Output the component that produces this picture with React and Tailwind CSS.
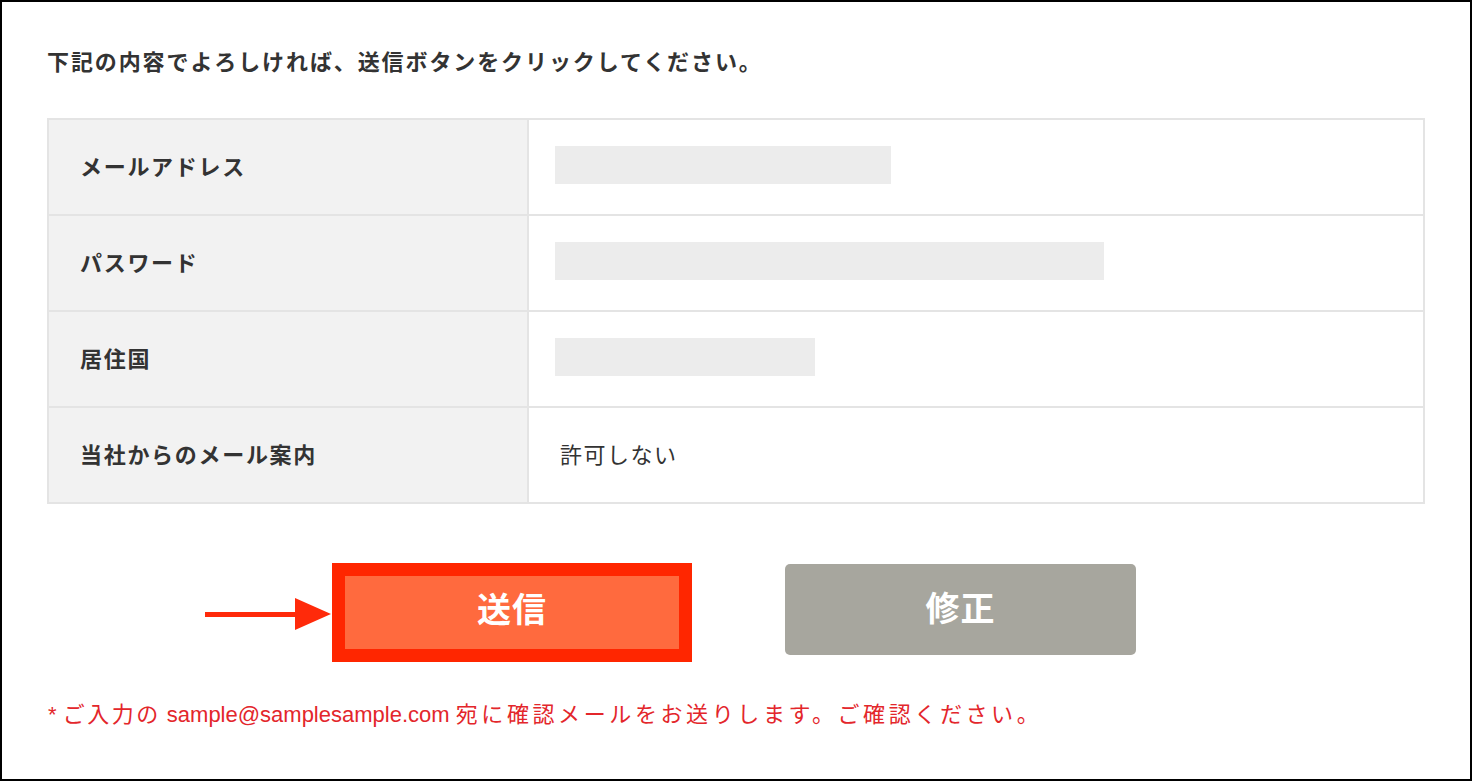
export default function App() {
  const rows = [
    { label: 'メールアドレス', bar: 'w-[336px]' },
    { label: 'パスワード', bar: 'w-[549px]' },
    { label: '居住国', bar: 'w-[260px]' },
    { label: '当社からのメール案内', text: '許可しない' },
  ];

  return (
    <div
      className="h-[781px] w-full border-2 border-black bg-white text-[#333]"
      style={{ fontFamily: '"Liberation Sans", "Noto Sans CJK JP", sans-serif' }}
    >
      <div className="px-[45px] pt-[46px]">
        <p className="text-[22px] font-bold leading-[30px] tracking-[1.9px]">
          下記の内容でよろしければ、送信ボタンをクリックしてください。
        </p>

        {/* Confirmation table */}
        <div className="mt-[40px] border-2 border-[#e4e4e4]">
          {rows.map((row, i) => (
            <div
              key={row.label}
              className={`flex ${i > 0 ? 'h-[96px] border-t-2 border-[#e4e4e4]' : 'h-[94px]'}`}
            >
              <div className="flex w-[480px] shrink-0 items-center border-r-2 border-[#e4e4e4] bg-[#f2f2f2] pl-[31px] text-[22px] font-bold tracking-[1.7px]">
                {row.label}
              </div>
              <div className="flex flex-1 items-center pl-[26px]">
                {row.bar ? (
                  <div className={`mb-[4px] h-[38px] bg-[#ececec] ${row.bar}`} />
                ) : (
                  <span className="pl-[5px] text-[22px] tracking-[1.5px]">{row.text}</span>
                )}
              </div>
            </div>
          ))}
        </div>

        {/* Buttons */}
        <div className="mt-[59px] flex items-start">
          <svg width="126" height="36" viewBox="0 0 126 36" className="ml-[158px] mt-[33px] shrink-0">
            <rect x="0" y="16" width="92" height="5" fill="#ff2a0a" />
            <polygon points="90,2 126,18 90,34" fill="#ff2a0a" />
          </svg>
          <div className="ml-[1px] flex h-[99px] w-[360px] shrink-0 items-center justify-center border-[13px] border-[#ff2600] bg-[#ff6a3e]">
            <span className="pb-[4px] text-[34px] font-bold tracking-[1px] text-white">送信</span>
          </div>
          <div className="ml-[93px] mt-[1px] flex h-[91px] w-[351px] shrink-0 items-center justify-center rounded-[5px] bg-[#a7a69e]">
            <span className="text-[34px] font-bold tracking-[1px] text-white">修正</span>
          </div>
        </div>

        <p className="mt-[38px] pl-[1px] text-[22px] leading-[30px] text-[#e3262b]">
          <span>* </span>
          <span className="tracking-[2.5px]">ご入力の</span>
          <span> sample@samplesample.com </span>
          <span className="tracking-[3.6px]">宛に確認メールをお送りします。ご確認ください。</span>
        </p>
      </div>
    </div>
  );
}
